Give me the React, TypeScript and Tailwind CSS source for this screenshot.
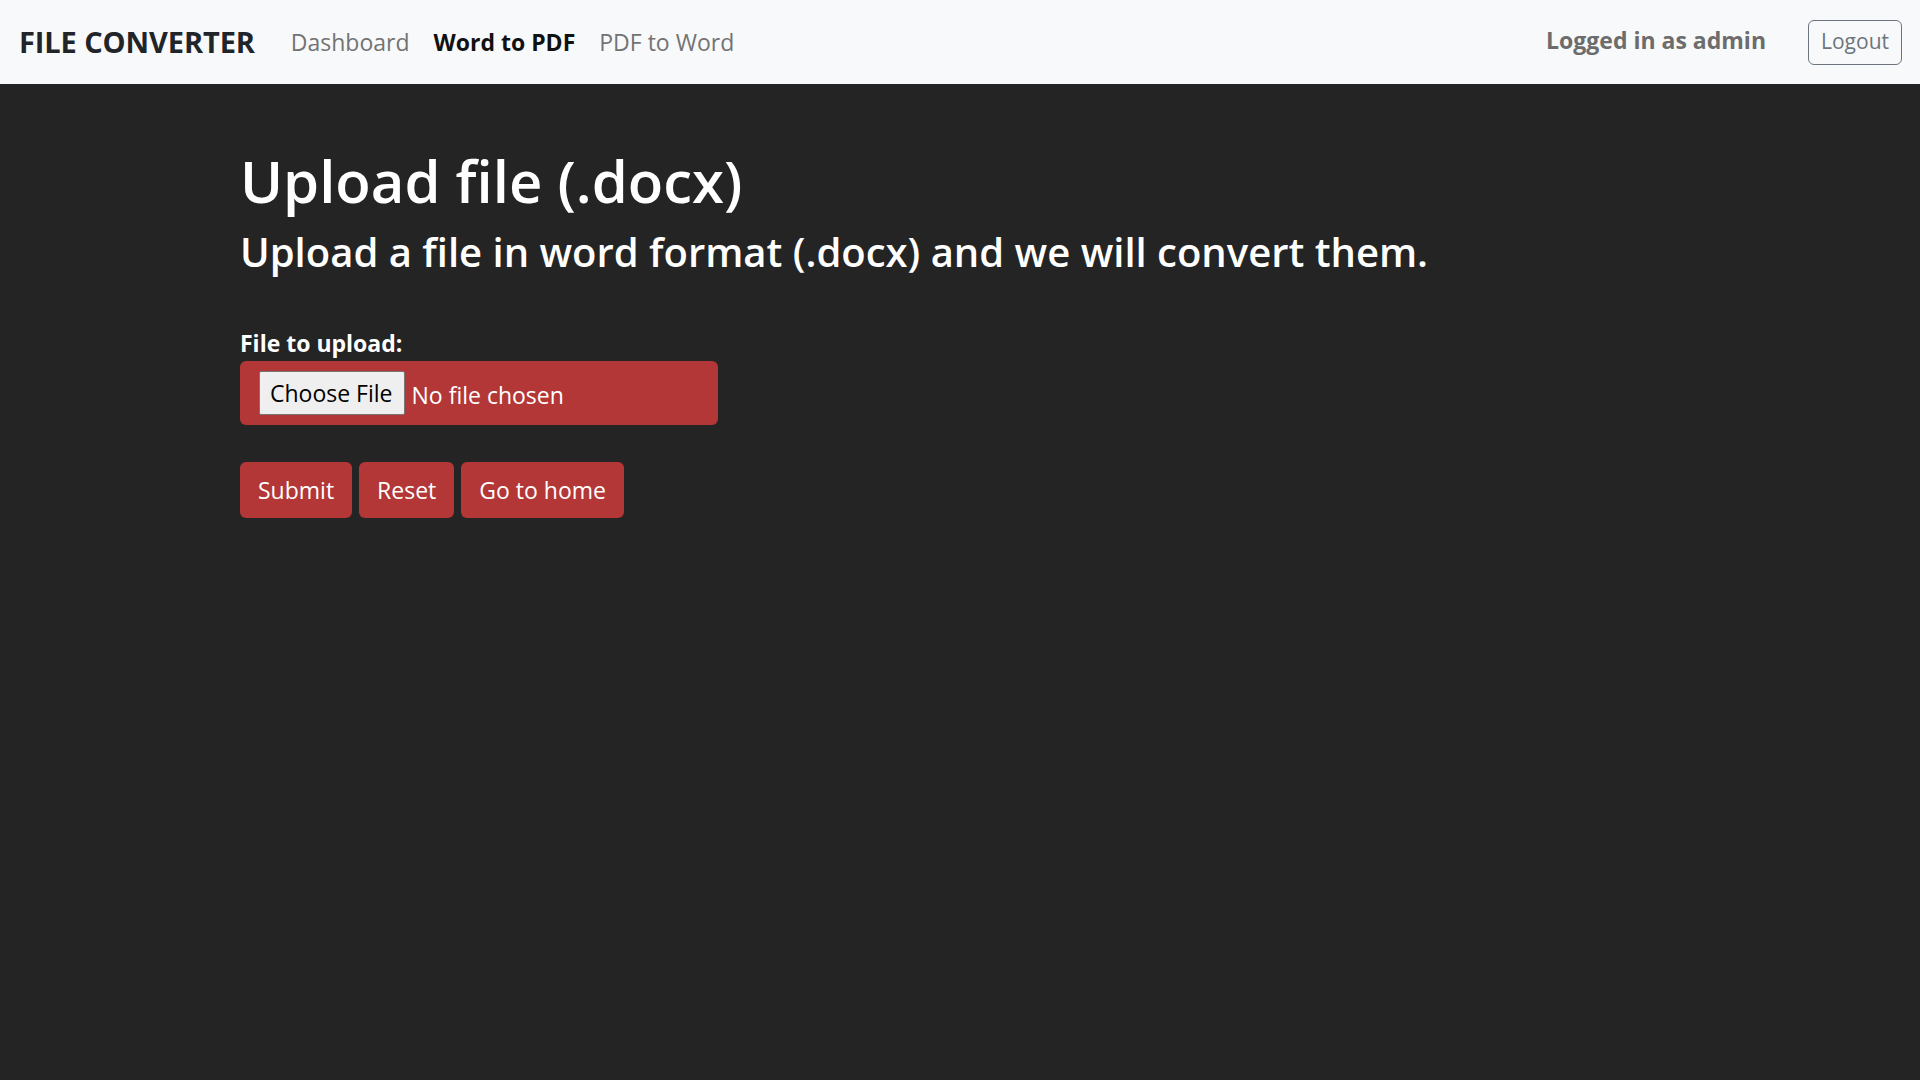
export default function App() {
    const font = { fontFamily: '"Open Sans", "Noto Sans", sans-serif' };

    return (
        <div className="min-h-screen bg-[#242424]" style={font}>
            <nav className="h-[84px] bg-[#f8f9fa] flex items-center pl-[19px] pr-[18px]">
                <div className="text-[29px] font-bold text-[#212529] tracking-[-0.1px] mr-[36px]">FILE CONVERTER</div>
                <div className="flex items-center gap-[24px] text-[23px]">
                    <a className="text-[#737373]">Dashboard</a>
                    <a className="text-[#111] font-bold">Word to PDF</a>
                    <a className="text-[#737373]">PDF to Word</a>
                </div>
                <div className="ml-auto flex items-center">
                    <span className="text-[23px] font-bold text-[#6c6c6c] mr-[42px] -mt-[4px]">Logged in as admin</span>
                    <button className="h-[45px] px-[12px] border border-[#6c757d] rounded-[6px] text-[21px] text-[#6c757d]">Logout</button>
                </div>
            </nav>

            <main className="pl-[240px] pt-[62px]">
                <h1 className="text-[58px] leading-[1.2] font-semibold text-white">Upload file (.docx)</h1>
                <h2 className="text-[40px] leading-[1.2] font-semibold text-white mt-[12px]">
                    Upload a file in word format (.docx) and we will convert them.
                </h2>

                <form className="mt-[53px]">
                    <label className="block text-[23px] font-bold text-white leading-[1.3]">File to upload:</label>
                    <div className="mt-[3px] w-[478px] h-[64px] bg-[#b33737] rounded-[6px] flex items-center pl-[19px]">
                        <span className="h-[44px] pl-[10px] pr-[11px] flex items-center bg-[#efefef] border border-[#767676] rounded-[2px] text-[23px] text-black">Choose File</span>
                        <span className="ml-[7px] mt-[3px] text-[23px] text-white">No file chosen</span>
                    </div>
                    <div className="mt-[37px] flex gap-[7px]">
                        <button type="button" className="h-[56px] px-[18px] bg-[#b33737] rounded-[6px] text-[23px] text-white">Submit</button>
                        <button type="button" className="h-[56px] px-[18px] bg-[#b33737] rounded-[6px] text-[23px] text-white">Reset</button>
                        <button type="button" className="h-[56px] px-[18px] bg-[#b33737] rounded-[6px] text-[23px] text-white">Go to home</button>
                    </div>
                </form>
            </main>
        </div>
    );
}
